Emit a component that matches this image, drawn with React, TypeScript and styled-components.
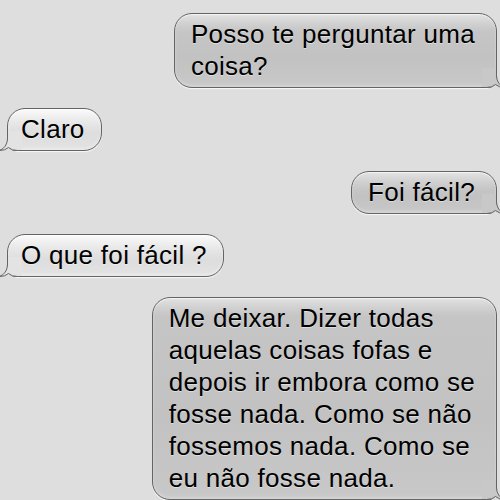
import React from "react";
import styled, { createGlobalStyle, css } from "styled-components";

const PAGE_BG = "#dedede";

const Global = createGlobalStyle`
  html, body {
    margin: 0;
    padding: 0;
    background: ${PAGE_BG};
    overflow: hidden;
  }
  body {
    font-family: "Liberation Sans", Arial, Helvetica, sans-serif;
  }
`;

const Thread = styled.div`
  display: flex;
  flex-direction: column;
  gap: 20px;
  padding: 13px 0 0 0;
  width: 500px;
  height: 500px;
  box-sizing: border-box;
  background: ${PAGE_BG};
`;

const Row = styled.div<{ $sent: boolean }>`
  display: flex;
  justify-content: ${(p) => (p.$sent ? "flex-end" : "flex-start")};
  padding: ${(p) => (p.$sent ? "0 3px 0 0" : "0 0 0 7px")};
`;

const Bubble = styled.div<{ $sent: boolean }>`
  position: relative;
  box-sizing: border-box;
  border: 1px solid #646464;
  border-radius: 18px;
  font-size: 26px;
  letter-spacing: 0.3px;
  line-height: 32px;
  color: #000;
  white-space: pre-line;
  text-shadow: 0 1px 0 rgba(255, 255, 255, 0.45);
  ${(p) =>
    p.$sent
      ? css`
          padding: 4px 21px 5px 16px;
          border-bottom-right-radius: 6px;
          background: linear-gradient(
            to bottom,
            #e2e2e2 0px,
            #d0d0d0 10px,
            #c5c5c5 18px,
            #c2c2c2 60%,
            #c8c8c8 100%
          );
          box-shadow: inset 0 1px 1px rgba(255, 255, 255, 0.7),
            inset 0 -2px 3px rgba(255, 255, 255, 0.25),
            0 1px 1px rgba(255, 255, 255, 0.8);
        `
      : css`
          padding: 4px 16px 5px 13px;
          border-bottom-left-radius: 6px;
          background: linear-gradient(
            to bottom,
            #fbfbfb 0px,
            #ececec 10px,
            #e3e3e3 18px,
            #dddddd 60%,
            #e3e3e3 100%
          );
          box-shadow: inset 0 1px 1px rgba(255, 255, 255, 0.9),
            inset 0 -2px 3px rgba(255, 255, 255, 0.3),
            0 1px 1px rgba(255, 255, 255, 0.8);
        `}
`;

const TailSvg = styled.svg<{ $sent: boolean }>`
  position: absolute;
  bottom: -1px;
  width: 24px;
  height: 24px;
  overflow: visible;
  ${(p) =>
    p.$sent
      ? css`
          right: -10px;
        `
      : css`
          left: -10px;
          transform: scaleX(-1);
        `}
`;

function Tail({ sent }: { sent: boolean }) {
  const fill = sent ? "#c8c8c8" : "#e3e3e3";
  return (
    <TailSvg $sent={sent} viewBox="0 0 24 24">
      <path d="M5 25 Q10 24 13.5 20.5 Q16.5 24 24 25 Z" fill={PAGE_BG} />
      <path
        d="M0 4 H14.5 V12 Q15 20.5 22.5 23.5 Q17 23.6 13.5 20.5 Q10.5 23.5 4.5 23.5 H0 Z"
        fill={fill}
      />
      <path
        d="M14.5 4 V12 Q15 20.5 22.5 23.5 Q17 23.6 13.5 20.5 Q10.5 23.5 4.5 23.5 H0"
        fill="none"
        stroke="#646464"
        strokeWidth="1"
      />
    </TailSvg>
  );
}

type Msg = { sent: boolean; text: string };

const messages: Msg[] = [
  { sent: true, text: "Posso te perguntar uma\ncoisa?" },
  { sent: false, text: "Claro" },
  { sent: true, text: "Foi fácil?" },
  { sent: false, text: "O que foi fácil ?" },
  {
    sent: true,
    text:
      "Me deixar. Dizer todas\naquelas coisas fofas e\ndepois ir embora como se\nfosse nada. Como se não\nfossemos nada. Como se\neu não fosse nada.",
  },
];

export default function App() {
  return (
    <>
      <Global />
      <Thread>
        {messages.map((m, i) => (
          <Row key={i} $sent={m.sent}>
            <Bubble $sent={m.sent}>
              {m.text}
              <Tail sent={m.sent} />
            </Bubble>
          </Row>
        ))}
      </Thread>
    </>
  );
}
